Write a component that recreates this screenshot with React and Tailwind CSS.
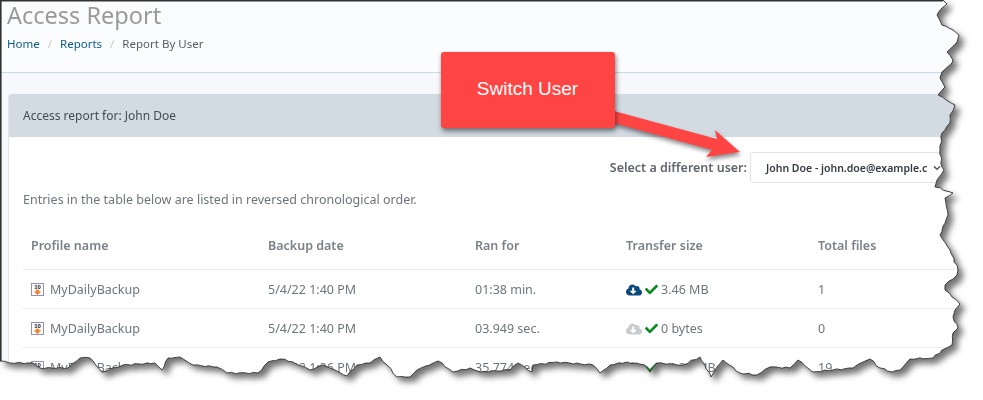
import React from "react";
import { FaCheck, FaChevronDown, FaCloudDownloadAlt } from "react-icons/fa";

// hand traced outline of the torn screenshot edge
const edge = [
	[0, 0], [943, 0], [947, 4], [942, 8], [937, 15], [942, 25], [953, 30], [959, 35], [957, 42], [947, 52], [953, 60], [952, 63],
	[942, 72], [940, 78], [945, 87], [938, 95], [955, 105], [950, 115], [950, 123], [942, 133], [940, 150], [942, 167], [944, 170],
	[937, 180], [935, 187], [953, 193], [945, 198], [948, 215], [940, 235], [950, 250], [958, 270], [957, 275], [945, 285], [945, 290],
	[952, 297], [960, 304], [955, 310], [953, 317], [958, 328], [953, 333], [952, 345], [942, 350], [933, 358], [910, 359], [900, 370],
	[892, 372], [880, 368], [870, 359], [863, 362], [853, 368], [833, 370], [813, 372], [798, 360], [790, 368], [770, 367], [757, 375],
	[740, 373], [723, 360], [717, 367], [711, 377], [700, 357], [683, 365], [657, 363], [650, 372], [645, 365], [627, 362], [610, 365],
	[600, 373], [593, 365], [557, 362], [533, 365], [532, 372], [518, 363], [510, 370], [480, 372], [470, 368], [453, 372], [438, 361],
	[417, 370], [410, 377], [397, 377], [387, 365], [380, 357], [370, 363], [357, 365], [347, 376], [330, 368], [323, 365], [310, 370],
	[293, 362], [280, 359], [268, 362], [258, 373], [227, 373], [217, 367], [193, 365], [180, 357], [168, 358], [162, 370], [155, 363],
	[123, 365], [102, 372], [90, 358], [80, 358], [68, 368], [40, 368], [33, 363], [10, 363], [0, 361],
];

// break long segments up a little so the tear looks rough
const roughen = (points) => {
	const out = [];
	points.forEach((p, i) => {
		out.push(p);
		const next = points[i + 1];
		if (!next || i === 0) return;
		const steps = Math.floor(Math.hypot(next[0] - p[0], next[1] - p[1]) / 4);
		for (let s = 1; s < steps; s++) {
			const t = s / steps;
			out.push([
				p[0] + (next[0] - p[0]) * t + Math.sin(i * 7 + s * 3.1) * 0.7,
				p[1] + (next[1] - p[1]) * t + Math.cos(i * 5 + s * 2.3) * 0.7,
			]);
		}
	});
	return out;
};

const outline = roughen(edge);
const clipPoints = outline.map((p) => p[0].toFixed(1) + "px " + p[1].toFixed(1) + "px").join(",");
const svgPoints = outline.map((p) => p[0].toFixed(1) + "," + p[1].toFixed(1)).join(" ");

const rows = [
	{ date: "5/4/22 1:40 PM", ran: "01:38 min.", size: "3.46 MB", files: "1", active: true },
	{ date: "5/4/22 1:40 PM", ran: "03.949 sec.", size: "0 bytes", files: "0", active: false },
	{ date: "5/4/22 1:36 PM", ran: "35.774 sec.", size: "14.33 MB", files: "19", active: true },
];

const ProfileIcon = () => (
	<svg width="13" height="13" viewBox="0 0 13 13" className="shrink-0">
		<rect x="0.5" y="0.5" width="12" height="12" fill="#fbfbfe" stroke="#8f93b8" />
		<text x="6.5" y="5.8" textAnchor="middle" fontSize="6" fontWeight="700" fill="#111" fontFamily="Liberation Sans, sans-serif">10</text>
		<path d="M4.8 6.8h3.4v1.6h2.2L6.5 12 2.6 8.4h2.2z" fill="#e8872e" />
	</svg>
);

const Row = ({ date, ran, size, files, active }) => (
	<div className="grid grid-cols-[237px_207px_151px_192px_1fr] items-center px-2 pt-[1px] h-[39px] border-b border-[#e9ecef]">
		<div className="flex items-center gap-[6px]">
			<ProfileIcon />
			<span>MyDailyBackup</span>
		</div>
		<div>{date}</div>
		<div>{ran}</div>
		<div className="flex items-center">
			<FaCloudDownloadAlt className={"text-[16px] mr-[3px] " + (active ? "text-[#0b4a7d]" : "text-[#c9cccf]")} />
			<FaCheck className="text-[13px] mr-[3px] text-[#0a8a1f]" />
			<span>{size}</span>
		</div>
		<div>{files}</div>
	</div>
);

const Page = () => (
	<div className="h-[400px] overflow-hidden bg-[#f6f8fb] text-[12.5px] text-[#6c757d] font-['Noto_Sans',sans-serif] leading-5">
		<div className="h-[73px] bg-[#fbfcfe] border-b border-[#c9dbe6] pl-[7px]">
			<h1 className="text-[23.5px] leading-[30px] text-[#9a9a9a]">Access Report</h1>
			<div className="flex items-center mt-[4px] text-[11.5px]">
				<a className="text-[#0b5a8f]">Home</a>
				<span className="mx-2 text-[#c4c8cc]">/</span>
				<a className="text-[#0b5a8f]">Reports</a>
				<span className="mx-2 text-[#c4c8cc]">/</span>
				<span className="text-[#555c63]">Report By User</span>
			</div>
		</div>
		<div className="mx-2 mt-[21px] rounded-t-[3px] bg-white border-l border-[#dfe5ec]">
			<div className="h-[43px] flex items-center bg-[#d2dae2] pl-[14px] pt-[1px] text-[12px] text-[#444b52] rounded-t-[3px]">
				Access report for: John Doe
			</div>
			<div className="pl-[14px] pr-[15px] pt-[15px]">
				<div className="flex justify-end items-center gap-[3px]">
					<span className="font-semibold text-[#5f666d]">Select a different user:</span>
					<div className="w-[210px] h-[31px] flex items-center pl-[15px] pr-[18px] justify-between bg-white border border-[#dee4ea] rounded-[3px] text-[10.5px] font-semibold text-[#333a41]">
						<span className="whitespace-nowrap">John Doe - john.doe@example.c</span>
						<FaChevronDown className="text-[8px] text-[#444b52]" />
					</div>
				</div>
				<p className="mt-[7px]">Entries in the table below are listed in reversed chronological order.</p>
				<div className="grid grid-cols-[237px_207px_151px_192px_1fr] items-start px-2 mt-[20px] h-[40px] pt-[6px] font-semibold text-[#7a8188] border-b border-[#e9ecef]">
					<div>Profile name</div>
					<div>Backup date</div>
					<div>Ran for</div>
					<div>Transfer size</div>
					<div>Total files</div>
				</div>
				{rows.map((row, index) => <Row key={index} {...row} />)}
			</div>
		</div>
	</div>
);

const App = () => {
	return (
		<div className="relative w-[983px] h-[400px] overflow-hidden bg-white">
			<div className="drop-shadow-[5px_5px_3px_rgba(0,0,0,0.55)]">
				<div style={{ clipPath: "polygon(" + clipPoints + ")" }}>
					<Page />
				</div>
			</div>
			<svg width="983" height="400" className="absolute inset-0 pointer-events-none">
				<polygon points={svgPoints} fill="none" stroke="#2b2b2b" strokeWidth="0.9" />
				<path d="M0.8 0 V361 M0 0.8 H943" stroke="#333" strokeWidth="1.6" fill="none" />
			</svg>
			<svg width="983" height="400" className="absolute inset-0 pointer-events-none drop-shadow-[1px_3px_2px_rgba(0,0,0,0.45)]">
				<polygon points="610,110 717,139 715,130 740,152 706,157 712,150 610,122" fill="#ff4444" />
			</svg>
			<div className="absolute left-[441px] top-[52px] w-[174px] h-[76px] flex items-center justify-center rounded-[3px] bg-[#ff4444] text-white text-[19px] font-['Liberation_Sans',sans-serif] pb-[1px] pr-[1px] shadow-[1px_3px_5px_rgba(0,0,0,0.5)]">
				Switch User
			</div>
		</div>
	);
};

export default App;
